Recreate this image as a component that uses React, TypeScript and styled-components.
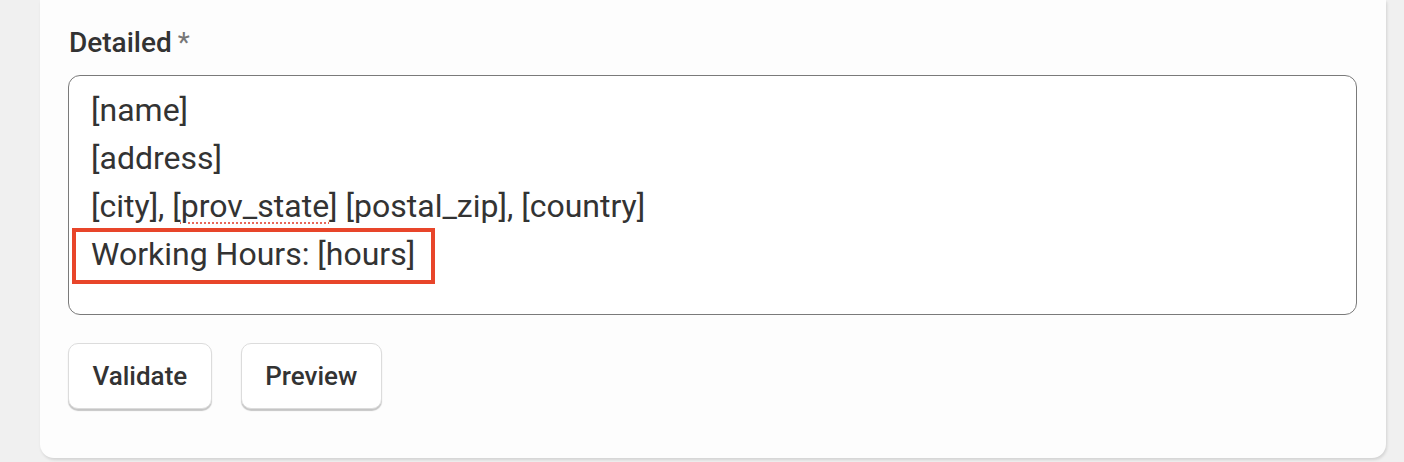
import React from "react";
import styled, { createGlobalStyle } from "styled-components";

const GlobalStyle = createGlobalStyle`
  html, body {
    margin: 0;
    padding: 0;
    background: #f0f0f0;
  }
  body {
    font-family: Roboto, "Noto Sans", Arial, sans-serif;
    color: #333;
  }
`;

const Page = styled.div`
  width: 1404px;
  height: 462px;
  padding: 0 18px 0 40px;
  box-sizing: border-box;
  overflow: hidden;
`;

const Card = styled.section`
  background: #fdfdfd;
  border-radius: 0 0 14px 14px;
  box-shadow: 1px 2px 3px rgba(0, 0, 0, 0.12);
  padding: 26px 29px 49px 28px;
  display: flex;
  flex-direction: column;
`;

const Label = styled.label`
  font-size: 28px;
  font-weight: 500;
  color: #333;
  line-height: 34px;
  margin-left: 1px;
  margin-bottom: 15px;
`;

const Required = styled.span`
  color: #777;
  font-weight: 400;
  margin-left: 6px;
`;

const TextArea = styled.div`
  height: 240px;
  box-sizing: border-box;
  border: 1px solid #7a7a7a;
  border-radius: 12px;
  padding: 10px 22px 9px;
  font-size: 32px;
  line-height: 48px;
  color: #333;
  background: #fff;
`;

const Line = styled.div`
  white-space: pre;
`;

const Misspelled = styled.span`
  text-decoration: underline dotted #e8685a;
  text-decoration-thickness: 2px;
  text-underline-offset: 5px;
`;

const Highlight = styled.span`
  display: inline-block;
  margin: -5px 0 -6px -19px;
  padding: 0 16px 4px 15px;
  border: 4px solid #e8452a;
  line-height: 44px;
`;

const Actions = styled.div`
  display: flex;
  gap: 29px;
  margin-top: 28px;
`;

const Button = styled.button`
  font-family: Roboto, "Noto Sans", Arial, sans-serif;
  font-size: 26px;
  font-weight: 500;
  color: #333;
  background: #fff;
  border: 1px solid #dcdcdc;
  border-radius: 10px;
  box-shadow: 0 2px 1px rgba(0, 0, 0, 0.22);
  height: 66px;
  padding: 0 23.5px;
  cursor: pointer;
`;

export default function App() {
  return (
    <>
      <GlobalStyle />
      <Page>
        <Card>
          <Label>
            Detailed<Required>*</Required>
          </Label>
          <TextArea>
            <Line>[name]</Line>
            <Line>[address]</Line>
            <Line>
              [city], [<Misspelled>prov_state</Misspelled>] [postal_zip], [country]
            </Line>
            <Line>
              <Highlight>Working Hours: [hours]</Highlight>
            </Line>
          </TextArea>
          <Actions>
            <Button>Validate</Button>
            <Button>Preview</Button>
          </Actions>
        </Card>
      </Page>
    </>
  );
}
